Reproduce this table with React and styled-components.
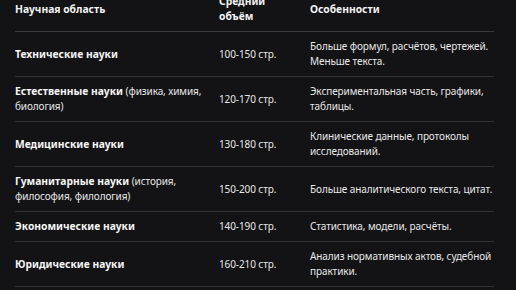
import styled, { createGlobalStyle } from 'styled-components';

const GlobalStyle = createGlobalStyle`
  html, body {
    margin: 0;
    padding: 0;
    background: #131215;
  }
  body {
    font-family: "Noto Sans", "Open Sans", sans-serif;
    color: #f2f2f2;
  }
`;

const Page = styled.div`
  padding: 0 22px 0 15px;
  margin-top: -13px;
`;

const Table = styled.table`
  width: 479px;
  border-collapse: collapse;
  table-layout: fixed;
  font-size: 10px;
  line-height: 15px;
`;

const HeadCell = styled.th`
  text-align: left;
  font-weight: 700;
  font-size: 10.3px;
  padding: 7px ${(p) => (p.$last ? '0' : '12px')} 7px 0;
  vertical-align: middle;
  border-bottom: 1px solid #3a3a3c;
`;

const Row = styled.tr`
  border-bottom: 1px solid #323234;
`;

const Cell = styled.td`
  padding: 7px ${(p) => (p.$last ? '0' : '12px')} 7px 0;
  vertical-align: middle;
  font-weight: ${(p) => (p.$strong ? 700 : 400)};
  font-size: ${(p) => (p.$strong ? '10.3px' : '10px')};
  letter-spacing: ${(p) => (p.$strong ? '0' : '-0.1px')};
  color: ${(p) => (p.$strong ? '#f6f6f6' : '#e8e8e8')};
`;

const Note = styled.span`
  font-weight: 400;
  font-size: 10px;
  letter-spacing: -0.1px;
  color: #e8e8e8;
`;

const rows = [
  { field: 'Технические науки', volume: '100-150 стр.', notes: 'Больше формул, расчётов, чертежей. Меньше текста.' },
  { field: 'Естественные науки', extra: '(физика, химия, биология)', volume: '120-170 стр.', notes: 'Экспериментальная часть, графики, таблицы.' },
  { field: 'Медицинские науки', volume: '130-180 стр.', notes: 'Клинические данные, протоколы исследований.' },
  { field: 'Гуманитарные науки', extra: '(история, философия, филология)', volume: '150-200 стр.', notes: 'Больше аналитического текста, цитат.' },
  { field: 'Экономические науки', volume: '140-190 стр.', notes: 'Статистика, модели, расчёты.' },
  { field: 'Юридические науки', volume: '160-210 стр.', notes: 'Анализ нормативных актов, судебной практики.' },
];

export default function App() {
  return (
    <Page>
      <GlobalStyle />
      <Table>
        <colgroup>
          <col style={{ width: 204 }} />
          <col style={{ width: 91 }} />
          <col style={{ width: 184 }} />
        </colgroup>
        <thead>
          <tr>
            <HeadCell>Научная область</HeadCell>
            <HeadCell>Средний объём</HeadCell>
            <HeadCell $last>Особенности</HeadCell>
          </tr>
        </thead>
        <tbody>
          {rows.map((r) => (
            <Row key={r.field}>
              <Cell $strong>
                {r.field}
                {r.extra && <Note> {r.extra}</Note>}
              </Cell>
              <Cell>{r.volume}</Cell>
              <Cell $last>{r.notes}</Cell>
            </Row>
          ))}
        </tbody>
      </Table>
    </Page>
  );
}
